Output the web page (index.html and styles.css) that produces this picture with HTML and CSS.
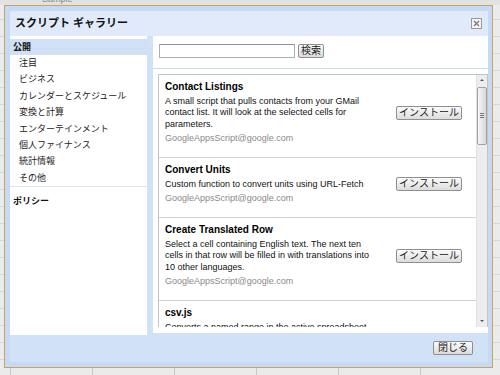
FILE: index.html
```html
<!DOCTYPE html>
<html>
<head>
    <title>スクリプト ギャラリー</title>
    <meta charset="utf-8">
    <link rel="stylesheet" href="styles.css">
</head>
<body>
    <div class="sheet">
        <span class="sheet-name">Sample</span>
    </div>

    <div class="dialog">
        <div class="dialog-inner">
            <div class="dialog-title">
                <span>スクリプト ギャラリー</span>
                <span class="close-btn">
                    <svg width="11" height="11" viewBox="0 0 11 11">
                        <rect x="0.5" y="0.5" width="10" height="10" fill="#f4f4f4" stroke="#9a9a9a"/>
                        <path d="M3 3 L8 8 M8 3 L3 8" stroke="#777" stroke-width="1.2"/>
                    </svg>
                </span>
            </div>

            <div class="dialog-body">
                <div class="side">
                    <div class="side-head active">公開</div>
                    <ul class="side-list">
                        <li>注目</li>
                        <li>ビジネス</li>
                        <li>カレンダーとスケジュール</li>
                        <li>変換と計算</li>
                        <li>エンターテインメント</li>
                        <li>個人ファイナンス</li>
                        <li>統計情報</li>
                        <li>その他</li>
                    </ul>
                    <div class="side-head policy">ポリシー</div>
                </div>

                <div class="main">
                    <div class="search-row">
                        <input type="text" class="search-input">
                        <button class="btn">検索</button>
                    </div>
                    <div class="rule"></div>

                    <div class="list">
                        <div class="items">
                            <div class="item">
                                <div class="item-text">
                                    <div class="item-title">Contact Listings</div>
                                    <div class="item-desc">A small script that pulls contacts from your GMail contact list. It will look at the selected cells for parameters.</div>
                                    <div class="item-mail">GoogleAppsScript@google.com</div>
                                </div>
                                <button class="btn install">インストール</button>
                            </div>
                            <div class="item">
                                <div class="item-text">
                                    <div class="item-title">Convert Units</div>
                                    <div class="item-desc">Custom function to convert units using URL-Fetch</div>
                                    <div class="item-mail">GoogleAppsScript@google.com</div>
                                </div>
                                <button class="btn install">インストール</button>
                            </div>
                            <div class="item">
                                <div class="item-text">
                                    <div class="item-title">Create Translated Row</div>
                                    <div class="item-desc">Select a cell containing English text. The next ten cells in that row will be filled in with translations into 10 other languages.</div>
                                    <div class="item-mail">GoogleAppsScript@google.com</div>
                                </div>
                                <button class="btn install">インストール</button>
                            </div>
                            <div class="item">
                                <div class="item-text">
                                    <div class="item-title">csv.js</div>
                                    <div class="item-desc">Converts a named range in the active spreadsheet to a CSV string that can be copied into another application or used as input for a different script.</div>
                                    <div class="item-mail">GoogleAppsScript@google.com</div>
                                </div>
                                <button class="btn install">インストール</button>
                            </div>
                        </div>

                        <div class="scrollbar">
                            <span class="arrow up"></span>
                            <span class="thumb"><span class="grip"></span></span>
                            <span class="arrow down"></span>
                        </div>
                    </div>
                </div>
            </div>

            <div class="dialog-foot">
                <button class="btn close">閉じる</button>
            </div>
        </div>
    </div>
</body>
</html>
```

FILE: styles.css
```css
body {
    margin: 0;
    width: 500px;
    height: 375px;
    overflow: hidden;
    font-family: 'Liberation Sans', 'Noto Sans CJK JP', sans-serif;
    color: #111;
    background-color: #ebebeb;
    background-image:
        linear-gradient(to right, #c9c9c9 1px, transparent 1px),
        linear-gradient(to bottom, #d6d6d6 1px, transparent 1px);
    background-size: 82px 17px, 100% 17px;
    background-position: 10px 0, 0 2px;
}
.sheet {
    height: 5px;
    background: #e2e2e2;
    position: relative;
    overflow: hidden;
}
.sheet-name {
    position: absolute;
    left: 42px;
    top: -5px;
    font-size: 9px;
    line-height: 9px;
    color: #888;
}

/* dialog frame */
.dialog {
    position: absolute;
    left: 4px;
    top: 5px;
    width: 478px;
    height: 351px;
    border: 1px solid #c9a45e;
    padding: 5px 4px 5px 5px;
    background: #c7daf5;
}
.dialog-inner {
    height: 100%;
    display: flex;
    flex-direction: column;
    background: #d2e2f6;
}
.dialog-title {
    height: 25px;
    flex: none;
    display: flex;
    align-items: center;
    justify-content: space-between;
    padding: 0 6px 0 5px;
    background: #e0eafa;
    font-size: 11px;
    font-weight: bold;
    line-height: 13px;
}
.close-btn {
    display: flex;
}
.close-btn svg {
    display: block;
}

.dialog-body {
    display: flex;
    gap: 6px;
    height: 299px;
    flex: none;
}

/* left menu */
.side {
    width: 137px;
    background: #fff;
    padding-top: 3px;
    font-size: 9px;
    line-height: 16.4px;
    box-sizing: border-box;
}
.side-head {
    height: 16px;
    line-height: 16px;
    padding-left: 3px;
    font-weight: bold;
}
.side-head.active {
    background: #d0e1f6;
}
.side-head.policy {
    margin-top: 6px;
}
.side-list {
    list-style: none;
    margin: 0 0 2px;
    padding: 0 0 0 9px;
    border-bottom: 1px solid #d8e5f4;
}
.side-list li {
    height: 16.4px;
    color: #222;
}

/* right panel */
.main {
    flex: 1;
    background: #fff;
    height: 297px;
    display: flex;
    flex-direction: column;
}
.search-row {
    display: flex;
    align-items: center;
    gap: 3px;
    padding: 8px 0 0 6px;
    height: 14px;
}
.search-input {
    width: 136px;
    height: 14px;
    box-sizing: border-box;
    margin: 0;
    border: 1px solid #a9afb7;
    border-top-color: #8e949c;
    padding: 0;
}
.rule {
    margin-top: 10px;
    height: 1px;
    background: #c9daf2;
}
.list {
    margin: 5px 0 0 5px;
    height: 253px;
    box-sizing: border-box;
    display: flex;
    border: 1px solid #c4c4c4;
    border-bottom: none;
    overflow: hidden;
}
.items {
    flex: 1;
    overflow: hidden;
}
.item {
    display: flex;
    align-items: center;
    padding: 6px 14px 13px 6px;
    border-bottom: 1px solid #d2d2d2;
}
.item-text {
    width: 210px;
}
.item-title {
    font-size: 10px;
    font-weight: bold;
    line-height: 12px;
    color: #000;
}
.item-desc {
    margin-top: 2.5px;
    font-size: 9px;
    line-height: 11.5px;
    color: #111;
}
.item-mail {
    margin-top: 3px;
    font-size: 9px;
    line-height: 11px;
    color: #8a8a8a;
}

/* buttons */
.btn {
    height: 14px;
    padding: 0 2px;
    margin: 0;
    border: 1px solid #8f8f8f;
    border-radius: 2px;
    background: linear-gradient(to bottom, #fbfbfb, #dcdcdc);
    font-family: 'Liberation Sans', 'Noto Sans CJK JP', sans-serif;
    font-size: 10px;
    line-height: 12px;
    color: #222;
}
.btn.install {
    margin-left: auto;
    width: 66px;
}
.btn.close {
    width: 40px;
}

/* scrollbar */
.scrollbar {
    width: 10px;
    flex: none;
    background: #ededed;
    border-left: 1px solid #e0e0e0;
    position: relative;
}
.arrow {
    position: absolute;
    left: 3px;
    width: 0;
    height: 0;
    border-left: 2px solid transparent;
    border-right: 2px solid transparent;
}
.arrow.up {
    top: 4px;
    border-bottom: 2px solid #555;
}
.arrow.down {
    bottom: 5px;
    border-top: 2px solid #555;
}
.thumb {
    position: absolute;
    top: 12px;
    left: 0;
    width: 8px;
    height: 56px;
    border: 1px solid #a2a2a2;
    border-radius: 2px;
    background: linear-gradient(to right, #f6f6f6, #d6d6d6);
}
.grip {
    position: absolute;
    top: 25px;
    left: 2px;
    width: 4px;
    height: 5px;
    background: repeating-linear-gradient(to bottom, #777 0 1px, transparent 1px 2px);
}

/* footer */
.dialog-foot {
    flex: 1;
    display: flex;
    align-items: center;
    justify-content: flex-end;
    padding: 0 15px 1px 0;
}
```
